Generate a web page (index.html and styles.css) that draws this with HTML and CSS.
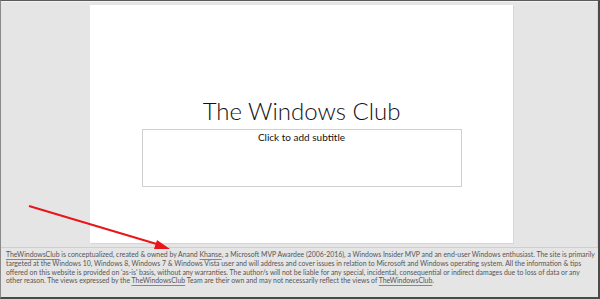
FILE: index.html
```html
<!DOCTYPE html>
<html>
<head>
<meta charset="utf-8">
<link rel="stylesheet" href="styles.css">
</head>
<body>
<div class="frame">
  <div class="editor">
    <div class="slide">
      <div class="title">The Windows Club</div>
      <div class="subtitle">Click to add subtitle</div>
    </div>
  </div>
  <div class="notes">
    <div class="line"><span class="sp">TheWindowsClub</span> is conceptualized, created &amp; owned by Anand <span class="sp">Khanse</span>, a Microsoft MVP Awardee (2006-2016), a Windows Insider MVP and an end-user Windows enthusiast. The site is primarily</div>
    <div class="line">targeted at the Windows 10, Windows 8, Windows 7 &amp; Windows Vista user and will address and cover issues in relation to Microsoft and Windows operating system. All the information &amp; tips</div>
    <div class="line">offered on this website is provided on 'as-is' basis, without any warranties. The author/s will not be liable for any special, incidental, consequential or indirect damages due to loss of data or any</div>
    <div class="line">other reason. The views expressed by the <span class="sp">TheWindowsClub</span> Team are their own and may not necessarily reflect the views of <span class="sp">TheWindowsClub</span>.</div>
  </div>
  <svg class="arrow" width="600" height="299" viewBox="0 0 600 299">
    <line x1="29" y1="206" x2="160" y2="245" stroke="#e8161b" stroke-width="2"/>
    <polygon points="170,249 157,240 154,249" fill="#e8161b"/>
  </svg>
</div>
</body>
</html>
```
FILE: styles.css
```css
html, body {
  margin: 0;
  padding: 0;
}
body {
  width: 600px;
  height: 299px;
  overflow: hidden;
  background: #e6e6e6;
}
.frame {
  position: relative;
  box-sizing: border-box;
  width: 600px;
  height: 299px;
  border-top: 1px solid #5a5a5a;
  border-left: 1px solid #8a8a8a;
  border-right: 2px solid #4a4a4a;
  border-bottom: 2px solid #4a4a4a;
  background: #e5e5e5;
  display: flex;
  flex-direction: column;
}
.editor {
  height: 246px;
  box-sizing: border-box;
  padding: 3px 0 0 89px;
  border-top: 1px solid #f2f2f2;
  border-right: 1px solid #d8d8d8;
}
.slide {
  width: 423px;
  height: 238px;
  background: #fff;
  box-shadow: 1px 1px 0 #d6d6d6;
  display: flex;
  flex-direction: column;
  align-items: center;
  padding-top: 90px;
  box-sizing: border-box;
}
.title {
  font-family: "Lato", "Open Sans", sans-serif;
  font-weight: 300;
  font-size: 24px;
  line-height: 32px;
  color: #111;
}
.subtitle {
  margin-top: 2px;
  width: 320px;
  height: 58px;
  box-sizing: border-box;
  border: 1px solid #d0d0d0;
  text-align: center;
  font-family: "Lato", "Open Sans", sans-serif;
  font-size: 10px;
  line-height: 13px;
  padding-top: 1px;
  color: #111;
}
.notes {
  flex: 1;
  border-top: 1px solid #cfcfcf;
  padding: 2px 4px 0 5px;
}
.line {
  white-space: nowrap;
  font-family: "Lato", "Noto Sans", sans-serif;
  font-size: 6.88px;
  line-height: 8.8px;
  color: #555;
}
.sp {
  text-decoration-line: underline;
  text-decoration-style: solid;
  text-decoration-color: #ee5a64;
  text-decoration-thickness: 1px;
  text-underline-offset: 1.5px;
}
.arrow {
  position: absolute;
  left: -1px;
  top: -1px;
  pointer-events: none;
}
```
